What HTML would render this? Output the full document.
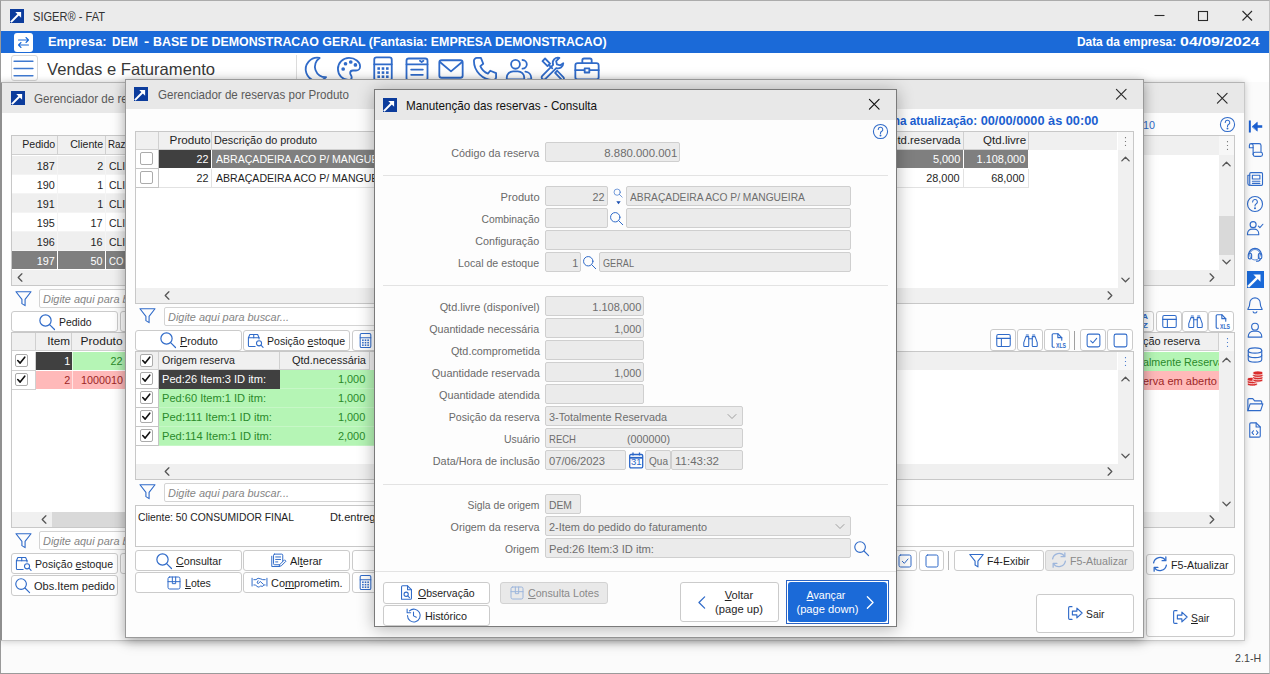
<!DOCTYPE html>
<html lang="pt-BR"><head><meta charset="utf-8"><title>SIGER - FAT</title>
<style>
html,body{margin:0;padding:0;}
body{width:1270px;height:674px;overflow:hidden;background:#fbfbfb;font-family:"Liberation Sans",sans-serif;}
#root{position:relative;width:1270px;height:674px;overflow:hidden;}
#root div{position:absolute;box-sizing:border-box;}
.t{white-space:pre;overflow:visible;}
svg{position:absolute;overflow:visible;}
.win{background:#fdfdfd;border:1px solid #9a9a9a;}
.tb{background:#e8e8e8;}
.hd{background:#f0f0f0;border-right:1px solid #d0d0d0;border-bottom:1px solid #d0d0d0;}
.cell{border-right:1px solid #e2e2e2;border-bottom:1px solid #e2e2e2;}
.btn{background:#fff;border:1px solid #cbcbcb;border-radius:3px;}
.btnd{background:#e9e9e9;border:1px solid #d2d2d2;border-radius:3px;}
.inp{background:#ebebeb;border:1px solid #cfcfcf;border-radius:2px;}
.fin{background:#fff;border:1px solid #d4d4d4;border-radius:2px;}
.sb{background:#f0f0f0;}
.grid{background:#fff;border:1px solid #c8c8c8;}
.sep{background:#e3e3e3;height:1px;}
.chk{background:#fff;border:1px solid #ababab;border-radius:2px;}
u{text-decoration:underline;text-underline-offset:1px;}

</style></head><body>
<div id="root">
<div class="" style="left:0px;top:0px;width:1270px;height:674px;background:#fbfbfb;border:1px solid;border-color:#ababab #c4c4c4 #9a9a9a #9a9a9a;"></div>
<div class="" style="left:1px;top:1px;width:1268px;height:30px;background:#ebebeb;"></div>
<svg style="left:10px;top:9px" width="14" height="14" viewBox="0 0 16 16"><rect width="16" height="16" fill="#0c3c9c"/><path d="M1 15L10.500 5.500" stroke="#fff" stroke-width="2.300" fill="none"/><path d="M6 3.300h6.700V10z" fill="#fff"/></svg>
<div class="t" style="top:1px;height:31px;line-height:31px;font-size:13.00px;color:#333;left:33px;transform-origin:0 50%;transform:scaleX(0.8525);">SIGER® - FAT</div>
<svg style="left:1153px;top:8px" width="110" height="16" viewBox="0 0 110 16" fill="none" stroke="#2a2a2a" stroke-width="1.100"><path d="M1.500 7.500h10"/><rect x="45.500" y="3.500" width="9" height="9"/><path d="M89.500 3l9.500 9.500M99 3L89.500 12.500"/></svg>
<div class="" style="left:1px;top:31px;width:1268px;height:22px;background:#1b6ad8;"></div>
<div class="" style="left:14px;top:33px;width:19px;height:19px;background:#fff;border-radius:3px;"></div>
<svg style="left:16.0px;top:35.0px;color:#1b6ad8" width="15" height="15" viewBox="0 0 24 24" fill="none" stroke="#1b6ad8" stroke-width="1.7" stroke-linecap="round" stroke-linejoin="round" ><path d="M4 8h16M16 4l4 4-4 4"/><path d="M20 16H4M8 12l-4 4 4 4"/></svg>
<div class="t" style="top:32px;height:21px;line-height:21px;font-size:12.50px;color:#fff;font-weight:bold;left:47.5px;transform-origin:0 50%;transform:scaleX(1.0286);">Empresa:</div>
<div class="t" style="top:32px;height:21px;line-height:21px;font-size:12.50px;color:#fff;font-weight:bold;left:111.5px;transform-origin:0 50%;transform:scaleX(0.9288);">DEM</div>
<div class="t" style="top:32px;height:21px;line-height:21px;font-size:12.50px;color:#fff;font-weight:bold;left:144px;transform-origin:0 50%;transform:scaleX(1.2491);">-</div>
<div class="t" style="top:32px;height:21px;line-height:21px;font-size:12.50px;color:#fff;font-weight:bold;left:152.9px;transform-origin:0 50%;transform:scaleX(0.9909);">BASE DE DEMONSTRACAO GERAL (Fantasia: EMPRESA DEMONSTRACAO)</div>
<div class="t" style="top:32px;height:21px;line-height:21px;font-size:12.50px;color:#fff;font-weight:bold;right:10px;text-align:right;transform-origin:100% 50%;transform:scaleX(1.2707);">04/09/2024</div>
<div class="t" style="top:32px;height:21px;line-height:21px;font-size:12.50px;color:#fff;font-weight:bold;right:94.20000000000005px;text-align:right;transform-origin:100% 50%;transform:scaleX(0.9528);">Data da empresa:</div>
<div class="" style="left:1px;top:53px;width:1268px;height:29px;background:#fff;"></div>
<div class="" style="left:11px;top:55px;width:27px;height:26px;background:#fff;border:1px solid #d8d8d8;border-radius:3px;"></div>
<svg style="left:11.2px;top:56.400000000000006px;color:#3f79cf" width="25" height="25" viewBox="0 0 24 24" fill="none" stroke="#3f79cf" stroke-width="1.5" stroke-linecap="round" stroke-linejoin="round" ><path d="M3 5h18M3 12h18M3 19h18"/></svg>
<div class="t" style="top:54px;height:30px;line-height:30px;font-size:16.50px;color:#383838;left:47px;transform-origin:0 50%;transform:scaleX(1.0063);">Vendas e Faturamento</div>
<div class="" style="left:296px;top:55px;width:1px;height:24px;background:#dcdcdc;"></div>
<svg style="left:301.0px;top:54.5px;color:#306bc9" width="28" height="28" viewBox="0 0 24 24" fill="none" stroke="#306bc9" stroke-width="1.55" stroke-linecap="round" stroke-linejoin="round" ><path d="M16 2.500a10 10 0 1 0 5.500 16.500 9 9 0 0 1-5.500-16.500z"/></svg>
<svg style="left:335.0px;top:54.5px;color:#306bc9" width="28" height="28" viewBox="0 0 24 24" fill="none" stroke="#306bc9" stroke-width="1.55" stroke-linecap="round" stroke-linejoin="round" ><path d="M12 2.500a9.500 9.500 0 1 0 0 19c1.500 0 2.300-1 2.300-2.200 0-1.800-1.300-2.300-1.300-3.800 0-1.300 1-2.200 2.400-2.200h2.600c2 0 3.500-1.500 3.500-3.500 0-4-4.200-7.300-9.500-7.300z"/><circle cx="7" cy="12" r=".800" fill="currentColor"/><circle cx="9" cy="7.500" r=".800" fill="currentColor"/><circle cx="13.500" cy="6" r=".800" fill="currentColor"/><circle cx="17.500" cy="8.500" r=".800" fill="currentColor"/></svg>
<svg style="left:369.0px;top:54.5px;color:#306bc9" width="28" height="28" viewBox="0 0 24 24" fill="none" stroke="#306bc9" stroke-width="1.55" stroke-linecap="round" stroke-linejoin="round" ><rect x="4.500" y="2" width="15" height="20" rx="2"/><path d="M4.500 8h15"/><g fill="currentColor" stroke="none"><rect x="7.200" y="10.500" width="2.200" height="2.200"/><rect x="10.900" y="10.500" width="2.200" height="2.200"/><rect x="14.600" y="10.500" width="2.200" height="2.200"/><rect x="7.200" y="14" width="2.200" height="2.200"/><rect x="10.900" y="14" width="2.200" height="2.200"/><rect x="14.600" y="14" width="2.200" height="2.200"/><rect x="7.200" y="17.500" width="2.200" height="2.200"/><rect x="10.900" y="17.500" width="2.200" height="2.200"/><rect x="14.600" y="17.500" width="2.200" height="2.200"/></g></svg>
<svg style="left:403.0px;top:54.5px;color:#306bc9" width="28" height="28" viewBox="0 0 24 24" fill="none" stroke="#306bc9" stroke-width="1.55" stroke-linecap="round" stroke-linejoin="round" ><rect x="3" y="3" width="18" height="19" rx="2"/><path d="M3 8h18"/><path d="M7 12.500h10M7 17h10"/><path d="M14.500 5l1.500 1 1.500-1"/></svg>
<svg style="left:437.0px;top:54.5px;color:#306bc9" width="28" height="28" viewBox="0 0 24 24" fill="none" stroke="#306bc9" stroke-width="1.55" stroke-linecap="round" stroke-linejoin="round" ><rect x="2" y="4.500" width="20" height="15" rx="2"/><path d="M2.500 6l9.500 8 9.500-8"/></svg>
<svg style="left:471.0px;top:54.5px;color:#306bc9" width="28" height="28" viewBox="0 0 24 24" fill="none" stroke="#306bc9" stroke-width="1.55" stroke-linecap="round" stroke-linejoin="round" ><path d="M5 2.500h3.500l2 5-2.500 2a12 12 0 0 0 6.500 6.500l2-2.500 5 2V19a2.500 2.500 0 0 1-2.500 2.500C10 21.500 2.500 14 2.500 5A2.500 2.500 0 0 1 5 2.500z"/></svg>
<svg style="left:505.0px;top:54.5px;color:#306bc9" width="28" height="28" viewBox="0 0 24 24" fill="none" stroke="#306bc9" stroke-width="1.55" stroke-linecap="round" stroke-linejoin="round" ><circle cx="9" cy="8" r="3.800"/><path d="M1.500 21v-1.500a5.500 5.500 0 0 1 5.500-5.500h4a5.500 5.500 0 0 1 5.500 5.500V21z"/><path d="M15 4.300a3.700 3.700 0 0 1 0 7.400"/><path d="M17.500 14.200a5.500 5.500 0 0 1 5 5.300V21h-3"/></svg>
<svg style="left:539.0px;top:54.5px;color:#306bc9" width="28" height="28" viewBox="0 0 24 24" fill="none" stroke="#306bc9" stroke-width="1.55" stroke-linecap="round" stroke-linejoin="round" ><path d="M20.800 7a4.500 4.500 0 0 1-6 4.200L5.500 20.500a1.900 1.900 0 0 1-2.700-2.700L12.100 8.500A4.500 4.500 0 0 1 17.500 2.500l-2.800 2.800 .700 2.800 2.800 .700z"/><path d="M3 5.200L5.200 3l4.300 4.300-2.200 2.200z"/><path d="M8.400 8.400l3 3"/><path d="M13.800 15.300l1.800-1.800 5.600 5.900a1.300 1.300 0 0 1-1.800 1.800z"/></svg>
<svg style="left:573.0px;top:54.5px;color:#306bc9" width="28" height="28" viewBox="0 0 24 24" fill="none" stroke="#306bc9" stroke-width="1.55" stroke-linecap="round" stroke-linejoin="round" ><rect x="2" y="7" width="20" height="14" rx="2"/><path d="M8 7V4.500a1.500 1.500 0 0 1 1.500-1.500h5a1.500 1.500 0 0 1 1.500 1.500V7"/><path d="M2 13h20"/><rect x="10" y="11.500" width="4" height="3.500" fill="#fff"/></svg>
<div class="t" style="top:648px;height:20px;line-height:20px;font-size:11.50px;color:#444;right:8.5px;text-align:right;transform-origin:100% 50%;transform:scaleX(0.9245);">2.1-H</div>
<div class="" style="left:1245px;top:82px;width:24px;height:559px;background:#fbfbfb;"></div>
<svg style="left:1246.5px;top:118.0px;color:#1b5fd0" width="17" height="17" viewBox="0 0 24 24" fill="none" stroke="#1b5fd0" stroke-width="2.4" stroke-linecap="round" stroke-linejoin="round" ><path d="M4 3.500v17" stroke-width="2.800" stroke-linecap="butt"/><path d="M13 12h8.500" stroke-width="3.600" stroke-linecap="butt"/><path d="M7.500 12l7-6v12z" fill="currentColor" stroke-width="1"/></svg>
<svg style="left:1246.0px;top:141.0px;color:#306bc9" width="18" height="18" viewBox="0 0 24 24" fill="none" stroke="#306bc9" stroke-width="1.5" stroke-linecap="round" stroke-linejoin="round" ><path d="M7 3.500h10.500a2.500 2.500 0 0 1 2.500 2.500v8"/><path d="M7 3.500a2.500 2.500 0 0 0-2.500 2.500v3h5v-3a2.500 2.500 0 0 0-2.500-2.500z"/><path d="M9.500 9v9"/><rect x="9.500" y="15" width="12.500" height="5.500" rx="2.500"/></svg>
<svg style="left:1246.0px;top:170.0px;color:#306bc9" width="18" height="18" viewBox="0 0 24 24" fill="none" stroke="#306bc9" stroke-width="1.5" stroke-linecap="round" stroke-linejoin="round" ><rect x="5" y="3.500" width="17" height="17" rx="1.500"/><path d="M5 7H2.500v11a2.500 2.500 0 0 0 2.500 2.500"/><rect x="8.500" y="7" width="10" height="5"/><path d="M8.500 15h10M8.500 17.800h10"/></svg>
<svg style="left:1246.0px;top:195.0px;color:#306bc9" width="18" height="18" viewBox="0 0 24 24" fill="none" stroke="#306bc9" stroke-width="1.5" stroke-linecap="round" stroke-linejoin="round" ><circle cx="12" cy="12" r="10"/><path d="M8.8 9.2a3.2 3.2 0 1 1 4.6 2.9c-.9.5-1.4 1.1-1.4 2.2v.4"/><circle cx="12" cy="17.6" r=".6" fill="currentColor"/></svg>
<svg style="left:1246.0px;top:219.0px;color:#306bc9" width="18" height="18" viewBox="0 0 24 24" fill="none" stroke="#306bc9" stroke-width="1.5" stroke-linecap="round" stroke-linejoin="round" ><circle cx="9.500" cy="7.500" r="4"/><path d="M2 21v-1.500a6 6 0 0 1 6-6h3a6 6 0 0 1 6 6V21z"/><path d="M16.500 9.500l2 2 4-4.500"/></svg>
<svg style="left:1246.0px;top:245.0px;color:#306bc9" width="18" height="18" viewBox="0 0 24 24" fill="none" stroke="#306bc9" stroke-width="1.5" stroke-linecap="round" stroke-linejoin="round" ><path d="M3.500 13a8.500 8.500 0 0 1 17 0"/><rect x="3" y="11" width="4.500" height="7.500" rx="2"/><rect x="16.500" y="11" width="4.500" height="7.500" rx="2"/><path d="M19 18.500c0 2-2 3-5 3"/><circle cx="12" cy="13" r="7" stroke-width="1"/></svg>
<svg style="left:1247px;top:270.5px" width="17" height="17" viewBox="0 0 16 16"><rect width="16" height="16" fill="#1b6ad8"/><path d="M1 15L10.500 5.500" stroke="#fff" stroke-width="2.300" fill="none"/><path d="M6 3.300h6.700V10z" fill="#fff"/></svg>
<svg style="left:1246.0px;top:296.0px;color:#306bc9" width="18" height="18" viewBox="0 0 24 24" fill="none" stroke="#306bc9" stroke-width="1.5" stroke-linecap="round" stroke-linejoin="round" ><path d="M12 2.500a7 7 0 0 0-7 7c0 5-2.500 7-2.500 8.500h19c0-1.500-2.500-3.500-2.500-8.500a7 7 0 0 0-7-7z"/><path d="M9.500 21a2.700 2.700 0 0 0 5 0"/></svg>
<svg style="left:1246.0px;top:321.0px;color:#306bc9" width="18" height="18" viewBox="0 0 24 24" fill="none" stroke="#306bc9" stroke-width="1.5" stroke-linecap="round" stroke-linejoin="round" ><circle cx="12" cy="7.500" r="4.500"/><path d="M3 21.500v-1a7 7 0 0 1 7-7h4a7 7 0 0 1 7 7v1z"/></svg>
<svg style="left:1246.0px;top:345.5px;color:#306bc9" width="18" height="18" viewBox="0 0 24 24" fill="none" stroke="#306bc9" stroke-width="1.5" stroke-linecap="round" stroke-linejoin="round" ><ellipse cx="12" cy="6" rx="9" ry="3.500"/><path d="M3 6v12c0 2 4 3.500 9 3.500s9-1.500 9-3.500V6"/><path d="M3 12c0 2 4 3.500 9 3.500s9-1.500 9-3.500"/></svg>
<svg style="left:1245.5px;top:369.0px" width="19" height="19" viewBox="0 0 24 24"><ellipse cx="8" cy="19" rx="6.500" ry="2.600" fill="#d92b2b" stroke="#fff" stroke-width="1"/><ellipse cx="8" cy="16" rx="6.500" ry="2.600" fill="#d92b2b" stroke="#fff" stroke-width="1"/><ellipse cx="8" cy="13" rx="6.500" ry="2.600" fill="#d92b2b" stroke="#fff" stroke-width="1"/><ellipse cx="15" cy="14" rx="6.500" ry="2.600" fill="#d92b2b" stroke="#fff" stroke-width="1"/><ellipse cx="15" cy="11" rx="6.500" ry="2.600" fill="#d92b2b" stroke="#fff" stroke-width="1"/><ellipse cx="15" cy="8" rx="6.500" ry="2.600" fill="#d92b2b" stroke="#fff" stroke-width="1"/><ellipse cx="15" cy="5" rx="6.500" ry="2.600" fill="#d92b2b" stroke="#fff" stroke-width="1"/></svg>
<svg style="left:1246.0px;top:395.5px;color:#306bc9" width="18" height="18" viewBox="0 0 24 24" fill="none" stroke="#306bc9" stroke-width="1.5" stroke-linecap="round" stroke-linejoin="round" ><path d="M2.500 19.500V5a1.500 1.500 0 0 1 1.500-1.500h5l2.500 3h8a1.500 1.500 0 0 1 1.500 1.500v2"/><path d="M2.500 19.500l3-9h17l-3 9z"/></svg>
<svg style="left:1246.0px;top:421.0px;color:#306bc9" width="18" height="18" viewBox="0 0 24 24" fill="none" stroke="#306bc9" stroke-width="1.5" stroke-linecap="round" stroke-linejoin="round" ><path d="M5 21.500V4a1.500 1.500 0 0 1 1.500-1.500h7l5.500 5.500v12a1.500 1.500 0 0 1-1.500 1.500z"/><path d="M13.500 2.500v5.500h5.500"/><path d="M10 13l-2 2.500 2 2.500M14 13l2 2.500-2 2.500"/></svg>
<div class="win" style="left:0px;top:82px;width:1245px;height:559px;border-color:#c9c9c9;border-top-color:#b4b4b4;border-left:2px solid #8e8e8e;box-shadow:0 0 7px rgba(0,0,0,.22);"></div>
<div class="tb" style="left:2px;top:83px;width:1242px;height:30px;"></div>
<svg style="left:11px;top:91px" width="14" height="14" viewBox="0 0 16 16"><rect width="16" height="16" fill="#0c3c9c"/><path d="M1 15L10.500 5.500" stroke="#fff" stroke-width="2.300" fill="none"/><path d="M6 3.300h6.700V10z" fill="#fff"/></svg>
<div class="t" style="top:84px;height:30px;line-height:30px;font-size:12.33px;color:#5a5a5a;left:34px;transform-origin:0 50%;transform:scaleX(0.9435);">Gerenciador de reservas</div>
<svg style="left:1214.75px;top:90.75px;color:#2a2a2a" width="14.5" height="14.5" viewBox="0 0 24 24" fill="none" stroke="#2a2a2a" stroke-width="1.9" stroke-linecap="round" stroke-linejoin="round" ><path d="M4 4l16 16M20 4L4 20"/></svg>
<div class="t" style="top:117px;height:16px;line-height:16px;font-size:10.50px;color:#306bc9;left:1143px;transform-origin:0 50%;transform:scaleX(1.0285);">10</div>
<svg style="left:1218.5px;top:115.5px;color:#306bc9" width="17" height="17" viewBox="0 0 24 24" fill="none" stroke="#306bc9" stroke-width="1.5" stroke-linecap="round" stroke-linejoin="round" ><circle cx="12" cy="12" r="10"/><path d="M8.8 9.2a3.2 3.2 0 1 1 4.6 2.9c-.9.5-1.4 1.1-1.4 2.2v.4"/><circle cx="12" cy="17.6" r=".6" fill="currentColor"/></svg>
<div class="grid" style="left:11px;top:135px;width:1224px;height:151px;"></div>
<div class="" style="left:12px;top:136px;width:1207px;height:19px;background:#f0f0f0;"></div>
<div class="" style="left:12px;top:155px;width:1207px;height:1px;background:#fff;"></div>
<div class="hd" style="left:12px;top:136px;width:46px;height:19px;"></div>
<div class="hd" style="left:58px;top:136px;width:48px;height:19px;"></div>
<div class="hd" style="left:106px;top:136px;width:294px;height:19px;"></div>
<div class="t" style="top:135px;height:18px;line-height:18px;font-size:11.30px;color:#1e1e1e;right:1215px;text-align:right;transform-origin:100% 50%;transform:scaleX(0.9378);">Pedido</div>
<div class="t" style="top:135px;height:18px;line-height:18px;font-size:11.30px;color:#1e1e1e;right:1167px;text-align:right;transform-origin:100% 50%;transform:scaleX(0.9381);">Cliente</div>
<div class="t" style="top:135px;height:18px;line-height:18px;font-size:11.30px;color:#1e1e1e;left:108px;transform-origin:0 50%;transform:scaleX(0.8703);">Raz</div>
<div class="" style="left:12px;top:156px;width:1000px;height:19px;background:#efefef;"></div>
<div class="cell" style="left:12px;top:156px;width:46px;height:19px;border-color:#f4f4f4;"></div>
<div class="cell" style="left:58px;top:156px;width:48px;height:19px;border-color:#f4f4f4;"></div>
<div class="cell" style="left:106px;top:156px;width:294px;height:19px;border-color:#f4f4f4;"></div>
<div class="t" style="top:157px;height:18px;line-height:18px;font-size:11.30px;color:#1e1e1e;right:1215px;text-align:right;transform-origin:100% 50%;transform:scaleX(0.9556);">187</div>
<div class="t" style="top:157px;height:18px;line-height:18px;font-size:11.30px;color:#1e1e1e;right:1167px;text-align:right;transform-origin:100% 50%;transform:scaleX(0.9556);">2</div>
<div class="t" style="top:157px;height:18px;line-height:18px;font-size:11.30px;color:#1e1e1e;left:109px;transform-origin:0 50%;transform:scaleX(0.9208);">CLI</div>
<div class="" style="left:12px;top:175px;width:1000px;height:19px;background:#fff;"></div>
<div class="cell" style="left:12px;top:175px;width:46px;height:19px;border-color:#f4f4f4;"></div>
<div class="cell" style="left:58px;top:175px;width:48px;height:19px;border-color:#f4f4f4;"></div>
<div class="cell" style="left:106px;top:175px;width:294px;height:19px;border-color:#f4f4f4;"></div>
<div class="t" style="top:176px;height:18px;line-height:18px;font-size:11.30px;color:#1e1e1e;right:1215px;text-align:right;transform-origin:100% 50%;transform:scaleX(0.9556);">190</div>
<div class="t" style="top:176px;height:18px;line-height:18px;font-size:11.30px;color:#1e1e1e;right:1167px;text-align:right;transform-origin:100% 50%;transform:scaleX(0.9556);">1</div>
<div class="t" style="top:176px;height:18px;line-height:18px;font-size:11.30px;color:#1e1e1e;left:109px;transform-origin:0 50%;transform:scaleX(0.9208);">CLI</div>
<div class="" style="left:12px;top:194px;width:1000px;height:19px;background:#efefef;"></div>
<div class="cell" style="left:12px;top:194px;width:46px;height:19px;border-color:#f4f4f4;"></div>
<div class="cell" style="left:58px;top:194px;width:48px;height:19px;border-color:#f4f4f4;"></div>
<div class="cell" style="left:106px;top:194px;width:294px;height:19px;border-color:#f4f4f4;"></div>
<div class="t" style="top:195px;height:18px;line-height:18px;font-size:11.30px;color:#1e1e1e;right:1215px;text-align:right;transform-origin:100% 50%;transform:scaleX(0.9556);">191</div>
<div class="t" style="top:195px;height:18px;line-height:18px;font-size:11.30px;color:#1e1e1e;right:1167px;text-align:right;transform-origin:100% 50%;transform:scaleX(0.9556);">1</div>
<div class="t" style="top:195px;height:18px;line-height:18px;font-size:11.30px;color:#1e1e1e;left:109px;transform-origin:0 50%;transform:scaleX(0.9208);">CLI</div>
<div class="" style="left:12px;top:213px;width:1000px;height:19px;background:#fff;"></div>
<div class="cell" style="left:12px;top:213px;width:46px;height:19px;border-color:#f4f4f4;"></div>
<div class="cell" style="left:58px;top:213px;width:48px;height:19px;border-color:#f4f4f4;"></div>
<div class="cell" style="left:106px;top:213px;width:294px;height:19px;border-color:#f4f4f4;"></div>
<div class="t" style="top:214px;height:18px;line-height:18px;font-size:11.30px;color:#1e1e1e;right:1215px;text-align:right;transform-origin:100% 50%;transform:scaleX(0.9556);">195</div>
<div class="t" style="top:214px;height:18px;line-height:18px;font-size:11.30px;color:#1e1e1e;right:1167px;text-align:right;transform-origin:100% 50%;transform:scaleX(0.9556);">17</div>
<div class="t" style="top:214px;height:18px;line-height:18px;font-size:11.30px;color:#1e1e1e;left:109px;transform-origin:0 50%;transform:scaleX(0.9208);">CLI</div>
<div class="" style="left:12px;top:232px;width:1000px;height:19px;background:#efefef;"></div>
<div class="cell" style="left:12px;top:232px;width:46px;height:19px;border-color:#f4f4f4;"></div>
<div class="cell" style="left:58px;top:232px;width:48px;height:19px;border-color:#f4f4f4;"></div>
<div class="cell" style="left:106px;top:232px;width:294px;height:19px;border-color:#f4f4f4;"></div>
<div class="t" style="top:233px;height:18px;line-height:18px;font-size:11.30px;color:#1e1e1e;right:1215px;text-align:right;transform-origin:100% 50%;transform:scaleX(0.9556);">196</div>
<div class="t" style="top:233px;height:18px;line-height:18px;font-size:11.30px;color:#1e1e1e;right:1167px;text-align:right;transform-origin:100% 50%;transform:scaleX(0.9556);">16</div>
<div class="t" style="top:233px;height:18px;line-height:18px;font-size:11.30px;color:#1e1e1e;left:109px;transform-origin:0 50%;transform:scaleX(0.9208);">CLI</div>
<div class="" style="left:12px;top:251px;width:1000px;height:19px;background:#7f7f7f;"></div>
<div class="cell" style="left:12px;top:251px;width:46px;height:19px;border-color:#fff;"></div>
<div class="cell" style="left:58px;top:251px;width:48px;height:19px;border-color:#fff;"></div>
<div class="cell" style="left:106px;top:251px;width:294px;height:19px;border-color:#fff;"></div>
<div class="t" style="top:252px;height:18px;line-height:18px;font-size:11.30px;color:#fff;right:1215px;text-align:right;transform-origin:100% 50%;transform:scaleX(0.9556);">197</div>
<div class="t" style="top:252px;height:18px;line-height:18px;font-size:11.30px;color:#fff;right:1167px;text-align:right;transform-origin:100% 50%;transform:scaleX(0.9556);">50</div>
<div class="t" style="top:252px;height:18px;line-height:18px;font-size:11.30px;color:#fff;left:109px;transform-origin:0 50%;transform:scaleX(0.8495);">CO</div>
<div class="sb" style="left:12px;top:270px;width:1222px;height:15px;"></div>
<svg style="left:14.5px;top:272.0px;color:#555" width="11" height="11" viewBox="0 0 24 24" fill="none" stroke="#555" stroke-width="2.9" stroke-linecap="round" stroke-linejoin="round" ><path d="M15 4l-8 8 8 8"/></svg>
<svg style="left:1205.5px;top:272.0px;color:#555" width="11" height="11" viewBox="0 0 24 24" fill="none" stroke="#555" stroke-width="2.9" stroke-linecap="round" stroke-linejoin="round" ><path d="M9 4l8 8-8 8"/></svg>
<div class="sb" style="left:1219px;top:155px;width:15px;height:115px;"></div>
<div class="" style="left:1219px;top:216px;width:15px;height:39px;background:#d9d9d9;"></div>
<svg style="left:1221.0px;top:158.5px;color:#555" width="11" height="11" viewBox="0 0 24 24" fill="none" stroke="#555" stroke-width="2.9" stroke-linecap="round" stroke-linejoin="round" ><path d="M4 15l8-8 8 8"/></svg>
<svg style="left:1221.0px;top:255.5px;color:#555" width="11" height="11" viewBox="0 0 24 24" fill="none" stroke="#555" stroke-width="2.9" stroke-linecap="round" stroke-linejoin="round" ><path d="M4 9l8 8 8-8"/></svg>
<div class="" style="left:1219px;top:136px;width:15px;height:19px;background:#f7f7f7;"></div>
<svg style="left:1220.5px;top:138.5px;color:#666" width="13" height="13" viewBox="0 0 24 24" fill="none" stroke="#666" stroke-width="1" stroke-linecap="round" stroke-linejoin="round" ><circle cx="12" cy="5" r="1.1" fill="currentColor" stroke="none"/><circle cx="12" cy="12" r="1.1" fill="currentColor" stroke="none"/><circle cx="12" cy="19" r="1.1" fill="currentColor" stroke="none"/></svg>
<svg style="left:14.0px;top:289.0px;color:#306bc9" width="19" height="19" viewBox="0 0 24 24" fill="none" stroke="#306bc9" stroke-width="1.4" stroke-linecap="round" stroke-linejoin="round" ><path d="M2.5 3.5h19l-7.5 9.5v8l-4-2.5v-5.5z"/></svg>
<div class="fin" style="left:39px;top:289px;width:673px;height:19px;"></div>
<div class="t" style="top:290px;height:19px;line-height:19px;font-size:11.30px;color:#858585;font-style:italic;left:43px;transform-origin:0 50%;transform:scaleX(0.9664);">Digite aqui para buscar...</div>
<div class="btn" style="left:11px;top:311px;width:107px;height:21px;"></div>
<svg style="left:37.7475px;top:312.5px;color:#306bc9" width="18" height="18" viewBox="0 0 24 24" fill="none" stroke="#306bc9" stroke-width="1.6" stroke-linecap="round" stroke-linejoin="round" ><circle cx="10" cy="10" r="7.5"/><path d="M15.5 15.5L22 22"/></svg>
<div class="t" style="top:312px;height:21px;line-height:21px;font-size:11.30px;color:#1e1e1e;left:58.7475px;transform-origin:0 50%;transform:scaleX(0.9238);">Pedido</div>
<div class="btn" style="left:120px;top:311px;width:107px;height:21px;"></div>
<div class="btn" style="left:1128px;top:311px;width:26px;height:21px;"></div>
<div class="t" style="top:312px;height:9px;line-height:9px;font-size:8.00px;color:#306bc9;font-weight:bold;left:1142px;transform-origin:0 50%;transform:scaleX(1.0385);">A</div>
<div class="t" style="top:320.5px;height:9px;line-height:9px;font-size:8.00px;color:#306bc9;font-weight:bold;left:1142px;transform-origin:0 50%;transform:scaleX(1.2278);">Z</div>
<div class="btn" style="left:1156px;top:311px;width:26px;height:21px;"></div>
<svg style="left:1160.5px;top:313.0px;color:#306bc9" width="17" height="17" viewBox="0 0 24 24" fill="none" stroke="#306bc9" stroke-width="1.5" stroke-linecap="round" stroke-linejoin="round" ><rect x="2.500" y="3.500" width="19" height="17" rx="2"/><path d="M2.500 9h19M9 9v11.500"/></svg>
<div class="btn" style="left:1182px;top:311px;width:26px;height:21px;"></div>
<svg style="left:1186.5px;top:313.0px;color:#306bc9" width="17" height="17" viewBox="0 0 24 24" fill="none" stroke="#306bc9" stroke-width="1.5" stroke-linecap="round" stroke-linejoin="round" ><path d="M5.500 6.500L2.500 15v4.500a1 1 0 0 0 1 1h5a1 1 0 0 0 1-1V6.500z"/><path d="M18.500 6.500l3 8.500v4.500a1 1 0 0 1-1 1h-5a1 1 0 0 1-1-1V6.500z"/><path d="M9.500 9.500h5"/><path d="M6 4.200h3M15 4.200h3"/></svg>
<div class="btn" style="left:1208px;top:311px;width:26px;height:21px;"></div>
<svg style="left:1212.5px;top:313.0px;color:#306bc9" width="17" height="17" viewBox="0 0 24 24" fill="none" stroke="#306bc9" stroke-width="1.6" stroke-linecap="round" stroke-linejoin="round" ><path d="M7.500 21.500H6a1.500 1.500 0 0 1-1.500-1.500V4a1.500 1.500 0 0 1 1.500-1.500h6.500l5.500 5.500v3.500"/><path d="M12.500 2.500v5.500h5.500"/></svg>
<div class="t" style="top:322.5px;height:8px;line-height:8px;font-size:7.00px;color:#306bc9;font-weight:bold;left:1219.5px;transform-origin:0 50%;transform:scaleX(0.7345);">XLS</div>
<div class="grid" style="left:11px;top:332px;width:1224px;height:196px;"></div>
<div class="" style="left:12px;top:333px;width:1207px;height:18px;background:#f0f0f0;"></div>
<div class="hd" style="left:12px;top:333px;width:24px;height:18px;"></div>
<div class="hd" style="left:36px;top:333px;width:36px;height:18px;"></div>
<div class="hd" style="left:72px;top:333px;width:55px;height:18px;"></div>
<div class="t" style="top:332px;height:18px;line-height:18px;font-size:11.30px;color:#1e1e1e;right:1200px;text-align:right;transform-origin:100% 50%;transform:scaleX(1.0376);">Item</div>
<div class="t" style="top:332px;height:18px;line-height:18px;font-size:11.30px;color:#1e1e1e;right:1147px;text-align:right;transform-origin:100% 50%;transform:scaleX(1.0612);">Produto</div>
<div class="" style="left:36px;top:352px;width:1183px;height:19px;background:#b5f5b5;border-bottom:1px solid #fff;"></div>
<div class="" style="left:36px;top:352px;width:36px;height:18px;background:#404040;"></div>
<div class="" style="left:72px;top:352px;width:1px;height:19px;background:rgba(255,255,255,.6);"></div>
<div class="" style="left:12px;top:352px;width:24px;height:19px;background:#fff;border-right:1px solid #d0d0d0;border-bottom:1px solid #d0d0d0;"></div>
<div class="chk" style="left:15.0px;top:354.0px;width:13px;height:13px;"></div>
<svg style="left:16.25px;top:355.25px;color:#111" width="10.5" height="10.5" viewBox="0 0 24 24" fill="none" stroke="#111" stroke-width="3.6" stroke-linecap="round" stroke-linejoin="round" ><path d="M4 12.500l5.500 6L20 5"/></svg>
<div class="t" style="top:352px;height:18px;line-height:18px;font-size:11.30px;color:#fff;right:1200px;text-align:right;transform-origin:100% 50%;transform:scaleX(0.9556);">1</div>
<div class="t" style="top:352px;height:18px;line-height:18px;font-size:11.30px;color:#2a8a2a;right:1147px;text-align:right;transform-origin:100% 50%;transform:scaleX(0.9556);">22</div>
<div class="" style="left:36px;top:371px;width:1183px;height:19px;background:#ffb9b9;border-bottom:1px solid #fff;"></div>
<div class="" style="left:72px;top:371px;width:1px;height:19px;background:rgba(255,255,255,.6);"></div>
<div class="" style="left:12px;top:371px;width:24px;height:19px;background:#fff;border-right:1px solid #d0d0d0;border-bottom:1px solid #d0d0d0;"></div>
<div class="chk" style="left:15.0px;top:373.0px;width:13px;height:13px;"></div>
<svg style="left:16.25px;top:374.25px;color:#111" width="10.5" height="10.5" viewBox="0 0 24 24" fill="none" stroke="#111" stroke-width="3.6" stroke-linecap="round" stroke-linejoin="round" ><path d="M4 12.500l5.500 6L20 5"/></svg>
<div class="t" style="top:371px;height:18px;line-height:18px;font-size:11.30px;color:#9c2626;right:1200px;text-align:right;transform-origin:100% 50%;transform:scaleX(0.9556);">2</div>
<div class="t" style="top:371px;height:18px;line-height:18px;font-size:11.30px;color:#9c2626;right:1147px;text-align:right;transform-origin:100% 50%;transform:scaleX(0.9556);">1000010</div>
<div class="hd" style="left:1143px;top:333px;width:76px;height:18px;"></div>
<div class="t" style="top:332px;height:18px;line-height:18px;font-size:11.30px;color:#1e1e1e;left:1143px;transform-origin:0 50%;transform:scaleX(0.9654);">ção reserva</div>
<div class="" style="left:1143px;top:352px;width:76px;height:19px;background:#b5f5b5;"></div>
<div class="t" style="top:353px;height:18px;line-height:18px;font-size:11.30px;color:#2a8a2a;left:1143px;transform-origin:0 50%;transform:scaleX(0.9483);">almente Reserva</div>
<div class="" style="left:1143px;top:371px;width:76px;height:19px;background:#ffb9b9;"></div>
<div class="t" style="top:372px;height:18px;line-height:18px;font-size:11.30px;color:#9c2626;left:1143px;transform-origin:0 50%;transform:scaleX(0.9737);">erva em aberto</div>
<div class="sb" style="left:1219px;top:351px;width:15px;height:161px;"></div>
<svg style="left:1221.0px;top:354.5px;color:#555" width="11" height="11" viewBox="0 0 24 24" fill="none" stroke="#555" stroke-width="2.9" stroke-linecap="round" stroke-linejoin="round" ><path d="M4 15l8-8 8 8"/></svg>
<svg style="left:1221.0px;top:497.5px;color:#555" width="11" height="11" viewBox="0 0 24 24" fill="none" stroke="#555" stroke-width="2.9" stroke-linecap="round" stroke-linejoin="round" ><path d="M4 9l8 8 8-8"/></svg>
<div class="" style="left:1219px;top:333px;width:15px;height:18px;background:#f7f7f7;"></div>
<svg style="left:1220.5px;top:335.5px;color:#306bc9" width="13" height="13" viewBox="0 0 24 24" fill="none" stroke="#306bc9" stroke-width="1" stroke-linecap="round" stroke-linejoin="round" ><circle cx="12" cy="5" r="1.1" fill="currentColor" stroke="none"/><circle cx="12" cy="12" r="1.1" fill="currentColor" stroke="none"/><circle cx="12" cy="19" r="1.1" fill="currentColor" stroke="none"/></svg>
<div class="sb" style="left:12px;top:512px;width:1222px;height:15px;"></div>
<div class="" style="left:52px;top:512px;width:900px;height:15px;background:#d9d9d9;"></div>
<svg style="left:38.5px;top:514.0px;color:#555" width="11" height="11" viewBox="0 0 24 24" fill="none" stroke="#555" stroke-width="2.9" stroke-linecap="round" stroke-linejoin="round" ><path d="M15 4l-8 8 8 8"/></svg>
<svg style="left:1205.5px;top:514.0px;color:#555" width="11" height="11" viewBox="0 0 24 24" fill="none" stroke="#555" stroke-width="2.9" stroke-linecap="round" stroke-linejoin="round" ><path d="M9 4l8 8-8 8"/></svg>
<svg style="left:14.0px;top:530.5px;color:#306bc9" width="19" height="19" viewBox="0 0 24 24" fill="none" stroke="#306bc9" stroke-width="1.4" stroke-linecap="round" stroke-linejoin="round" ><path d="M2.5 3.5h19l-7.5 9.5v8l-4-2.5v-5.5z"/></svg>
<div class="fin" style="left:39px;top:531px;width:673px;height:19px;"></div>
<div class="t" style="top:532px;height:19px;line-height:19px;font-size:11.30px;color:#858585;font-style:italic;left:43px;transform-origin:0 50%;transform:scaleX(0.9664);">Digite aqui para buscar...</div>
<div class="btn" style="left:11px;top:553px;width:107px;height:21px;"></div>
<svg style="left:15.466500000000003px;top:555.0px;color:#306bc9" width="17" height="17" viewBox="0 0 24 24" fill="none" stroke="#306bc9" stroke-width="1.5" stroke-linecap="round" stroke-linejoin="round" ><path d="M2 8v11a1.5 1.5 0 0 0 1.500 1.500h8"/><path d="M2 8l2-4.500h11l2 4.500z"/><path d="M9.500 3.500v4.500"/><path d="M17 8v2"/><circle cx="17" cy="16" r="3.600"/><path d="M19.700 18.700l3 3"/></svg>
<div class="t" style="top:554px;height:21px;line-height:21px;font-size:11.30px;color:#1e1e1e;left:35.4665px;transform-origin:0 50%;transform:scaleX(0.9343);">Posição <u>e</u>stoque</div>
<div class="btn" style="left:120px;top:553px;width:107px;height:21px;"></div>
<div class="btn" style="left:11px;top:575px;width:107px;height:21px;"></div>
<svg style="left:14.058500000000002px;top:577.0px;color:#306bc9" width="17" height="17" viewBox="0 0 24 24" fill="none" stroke="#306bc9" stroke-width="1.6" stroke-linecap="round" stroke-linejoin="round" ><circle cx="10" cy="10" r="7.5"/><path d="M15.5 15.5L22 22"/></svg>
<div class="t" style="top:576px;height:21px;line-height:21px;font-size:11.30px;color:#1e1e1e;left:34.0585px;transform-origin:0 50%;transform:scaleX(0.9755);">Obs.Item pedido</div>
<div class="btn" style="left:1145.5px;top:553.5px;width:89.5px;height:21px;"></div>
<svg style="left:1151.463px;top:555.0px;color:#306bc9" width="18" height="18" viewBox="0 0 24 24" fill="none" stroke="#306bc9" stroke-width="1.7" stroke-linecap="round" stroke-linejoin="round" ><path d="M3.500 10.500a8.700 8.700 0 0 1 15.800-3.500"/><path d="M19.800 2.500v5h-5"/><path d="M20.500 13.500a8.700 8.700 0 0 1-15.800 3.500"/><path d="M4.200 21.500v-5h5"/></svg>
<div class="t" style="top:554.5px;height:21px;line-height:21px;font-size:11.30px;color:#1e1e1e;left:1171.463px;transform-origin:0 50%;transform:scaleX(0.9451);">F5-Atualizar</div>
<div class="btn" style="left:1145.5px;top:597.5px;width:89.5px;height:39px;"></div>
<svg style="left:1171.0595px;top:608.0px;color:#306bc9" width="18" height="18" viewBox="0 0 24 24" fill="none" stroke="#306bc9" stroke-width="1.5" stroke-linecap="round" stroke-linejoin="round" ><path d="M8 3.500h-3a1.500 1.500 0 0 0-1.500 1.500v14a1.500 1.500 0 0 0 1.500 1.500h3"/><path d="M8.500 9.500h6v-4l7 6.500-7 6.500v-4h-6z"/></svg>
<div class="t" style="top:598.5px;height:39px;line-height:39px;font-size:11.30px;color:#1e1e1e;left:1191.0595px;transform-origin:0 50%;transform:scaleX(0.9146);"><u>S</u>air</div>
<div class="win" style="left:125px;top:79px;width:1019px;height:559px;box-shadow:0 3px 12px rgba(0,0,0,.36);"></div>
<div class="tb" style="left:126px;top:80px;width:1017px;height:29px;"></div>
<svg style="left:134px;top:87px" width="14" height="14" viewBox="0 0 16 16"><rect width="16" height="16" fill="#0c3c9c"/><path d="M1 15L10.500 5.500" stroke="#fff" stroke-width="2.300" fill="none"/><path d="M6 3.300h6.700V10z" fill="#fff"/></svg>
<div class="t" style="top:81px;height:29px;line-height:29px;font-size:12.33px;color:#5a5a5a;left:158px;transform-origin:0 50%;transform:scaleX(0.9385);">Gerenciador de reservas por Produto</div>
<svg style="left:1113.75px;top:86.75px;color:#2a2a2a" width="14.5" height="14.5" viewBox="0 0 24 24" fill="none" stroke="#2a2a2a" stroke-width="1.9" stroke-linecap="round" stroke-linejoin="round" ><path d="M4 4l16 16M20 4L4 20"/></svg>
<div class="t" style="top:113px;height:16px;line-height:16px;font-size:12.50px;color:#1b5fd0;font-weight:bold;right:172px;text-align:right;transform-origin:100% 50%;transform:scaleX(1.0201);">00/00/0000 às 00:00</div>
<div class="t" style="top:113px;height:16px;line-height:16px;font-size:12.50px;color:#1b5fd0;font-weight:bold;right:292.79999999999995px;text-align:right;transform-origin:100% 50%;transform:scaleX(0.9433);">Última atualização:</div>
<div class="grid" style="left:135px;top:131px;width:999px;height:173px;"></div>
<div class="" style="left:136px;top:132px;width:981px;height:18px;background:#f0f0f0;"></div>
<div class="hd" style="left:136px;top:132px;width:23px;height:18px;"></div>
<div class="hd" style="left:159px;top:132px;width:53px;height:18px;"></div>
<div class="hd" style="left:212px;top:132px;width:488px;height:18px;"></div>
<div class="hd" style="left:700px;top:132px;width:192px;height:18px;"></div>
<div class="hd" style="left:892px;top:132px;width:72px;height:18px;"></div>
<div class="hd" style="left:964px;top:132px;width:65px;height:18px;"></div>
<div class="t" style="top:131px;height:18px;line-height:18px;font-size:11.30px;color:#1e1e1e;right:1059px;text-align:right;transform-origin:100% 50%;transform:scaleX(1.0359);">Produto</div>
<div class="t" style="top:131px;height:18px;line-height:18px;font-size:11.30px;color:#1e1e1e;left:214px;transform-origin:0 50%;transform:scaleX(0.9589);">Descrição do produto</div>
<div class="t" style="top:131px;height:18px;line-height:18px;font-size:11.30px;color:#1e1e1e;right:309px;text-align:right;transform-origin:100% 50%;transform:scaleX(1.0055);">Qtd.reservada</div>
<div class="t" style="top:131px;height:18px;line-height:18px;font-size:11.30px;color:#1e1e1e;right:244px;text-align:right;transform-origin:100% 50%;transform:scaleX(1.0221);">Qtd.livre</div>
<div class="" style="left:159px;top:150px;width:870px;height:19px;background:#7f7f7f;"></div>
<div class="" style="left:159px;top:150px;width:53px;height:19px;background:#404040;"></div>
<div class="cell" style="left:136px;top:150px;width:23px;height:19px;border-color:#fff;"></div>
<div class="cell" style="left:159px;top:150px;width:53px;height:19px;border-color:#fff;"></div>
<div class="cell" style="left:212px;top:150px;width:488px;height:19px;border-color:#fff;"></div>
<div class="cell" style="left:700px;top:150px;width:192px;height:19px;border-color:#fff;"></div>
<div class="cell" style="left:892px;top:150px;width:72px;height:19px;border-color:#fff;"></div>
<div class="cell" style="left:964px;top:150px;width:65px;height:19px;border-color:#fff;"></div>
<div class="" style="left:136px;top:150px;width:23px;height:19px;background:#fff;border-right:1px solid #c4c4c4;border-bottom:1px solid #c4c4c4;"></div>
<div class="chk" style="left:139.5px;top:152.0px;width:13px;height:13px;"></div>
<div class="t" style="top:150px;height:18px;line-height:18px;font-size:11.30px;color:#fff;right:1061px;text-align:right;transform-origin:100% 50%;transform:scaleX(0.9556);">22</div>
<div class="t" style="top:150px;height:18px;line-height:18px;font-size:11.30px;color:#fff;left:216px;transform-origin:0 50%;transform:scaleX(0.9337);">ABRAÇADEIRA ACO P/ MANGUEIRA</div>
<div class="t" style="top:150px;height:18px;line-height:18px;font-size:11.30px;color:#fff;right:310px;text-align:right;transform-origin:100% 50%;transform:scaleX(0.9674);">5,000</div>
<div class="t" style="top:150px;height:18px;line-height:18px;font-size:11.30px;color:#fff;right:245px;text-align:right;transform-origin:100% 50%;transform:scaleX(0.9689);">1.108,000</div>
<div class="cell" style="left:136px;top:169px;width:23px;height:19px;"></div>
<div class="cell" style="left:159px;top:169px;width:53px;height:19px;"></div>
<div class="cell" style="left:212px;top:169px;width:488px;height:19px;"></div>
<div class="cell" style="left:700px;top:169px;width:192px;height:19px;"></div>
<div class="cell" style="left:892px;top:169px;width:72px;height:19px;"></div>
<div class="cell" style="left:964px;top:169px;width:65px;height:19px;"></div>
<div class="" style="left:136px;top:169px;width:23px;height:19px;background:#fff;border-right:1px solid #c4c4c4;border-bottom:1px solid #c4c4c4;"></div>
<div class="chk" style="left:139.5px;top:171.0px;width:13px;height:13px;"></div>
<div class="t" style="top:169px;height:18px;line-height:18px;font-size:11.30px;color:#1e1e1e;right:1061px;text-align:right;transform-origin:100% 50%;transform:scaleX(0.9556);">22</div>
<div class="t" style="top:169px;height:18px;line-height:18px;font-size:11.30px;color:#1e1e1e;left:216px;transform-origin:0 50%;transform:scaleX(0.9337);">ABRAÇADEIRA ACO P/ MANGUEIRA</div>
<div class="t" style="top:169px;height:18px;line-height:18px;font-size:11.30px;color:#1e1e1e;right:310px;text-align:right;transform-origin:100% 50%;transform:scaleX(0.9653);">28,000</div>
<div class="t" style="top:169px;height:18px;line-height:18px;font-size:11.30px;color:#1e1e1e;right:245px;text-align:right;transform-origin:100% 50%;transform:scaleX(0.9653);">68,000</div>
<div class="sb" style="left:1118px;top:150px;width:15px;height:138px;"></div>
<svg style="left:1120.0px;top:153.5px;color:#555" width="11" height="11" viewBox="0 0 24 24" fill="none" stroke="#555" stroke-width="2.9" stroke-linecap="round" stroke-linejoin="round" ><path d="M4 15l8-8 8 8"/></svg>
<svg style="left:1120.0px;top:273.5px;color:#555" width="11" height="11" viewBox="0 0 24 24" fill="none" stroke="#555" stroke-width="2.9" stroke-linecap="round" stroke-linejoin="round" ><path d="M4 9l8 8 8-8"/></svg>
<div class="" style="left:1118px;top:132px;width:15px;height:18px;background:#f7f7f7;"></div>
<svg style="left:1119.0px;top:134.5px;color:#666" width="13" height="13" viewBox="0 0 24 24" fill="none" stroke="#666" stroke-width="1" stroke-linecap="round" stroke-linejoin="round" ><circle cx="12" cy="5" r="1.1" fill="currentColor" stroke="none"/><circle cx="12" cy="12" r="1.1" fill="currentColor" stroke="none"/><circle cx="12" cy="19" r="1.1" fill="currentColor" stroke="none"/></svg>
<div class="sb" style="left:136px;top:288px;width:997px;height:15px;"></div>
<svg style="left:161.5px;top:290.0px;color:#555" width="11" height="11" viewBox="0 0 24 24" fill="none" stroke="#555" stroke-width="2.9" stroke-linecap="round" stroke-linejoin="round" ><path d="M15 4l-8 8 8 8"/></svg>
<svg style="left:1103.5px;top:290.0px;color:#555" width="11" height="11" viewBox="0 0 24 24" fill="none" stroke="#555" stroke-width="2.9" stroke-linecap="round" stroke-linejoin="round" ><path d="M9 4l8 8-8 8"/></svg>
<svg style="left:138.0px;top:306.0px;color:#306bc9" width="19" height="19" viewBox="0 0 24 24" fill="none" stroke="#306bc9" stroke-width="1.4" stroke-linecap="round" stroke-linejoin="round" ><path d="M2.5 3.5h19l-7.5 9.5v8l-4-2.5v-5.5z"/></svg>
<div class="fin" style="left:164px;top:307px;width:572px;height:19px;"></div>
<div class="t" style="top:308px;height:19px;line-height:19px;font-size:11.30px;color:#858585;font-style:italic;left:168px;transform-origin:0 50%;transform:scaleX(0.9664);">Digite aqui para buscar...</div>
<div class="btn" style="left:135px;top:329.5px;width:107px;height:21.5px;"></div>
<svg style="left:159.069px;top:331.25px;color:#306bc9" width="18" height="18" viewBox="0 0 24 24" fill="none" stroke="#306bc9" stroke-width="1.6" stroke-linecap="round" stroke-linejoin="round" ><circle cx="10" cy="10" r="7.5"/><path d="M15.5 15.5L22 22"/></svg>
<div class="t" style="top:330.5px;height:21.5px;line-height:21.5px;font-size:11.30px;color:#1e1e1e;left:180.069px;transform-origin:0 50%;transform:scaleX(0.9566);"><u>P</u>roduto</div>
<div class="btn" style="left:243px;top:329.5px;width:107px;height:21.5px;"></div>
<svg style="left:247.4665px;top:331.75px;color:#306bc9" width="17" height="17" viewBox="0 0 24 24" fill="none" stroke="#306bc9" stroke-width="1.5" stroke-linecap="round" stroke-linejoin="round" ><path d="M2 8v11a1.5 1.5 0 0 0 1.500 1.500h8"/><path d="M2 8l2-4.500h11l2 4.500z"/><path d="M9.500 3.500v4.500"/><path d="M17 8v2"/><circle cx="17" cy="16" r="3.600"/><path d="M19.700 18.700l3 3"/></svg>
<div class="t" style="top:330.5px;height:21.5px;line-height:21.5px;font-size:11.30px;color:#1e1e1e;left:267.4665px;transform-origin:0 50%;transform:scaleX(0.9343);">Posição <u>e</u>stoque</div>
<div class="btn" style="left:352px;top:329.5px;width:26px;height:21.5px;"></div>
<svg style="left:356.5px;top:331.75px;color:#306bc9" width="17" height="17" viewBox="0 0 24 24" fill="none" stroke="#306bc9" stroke-width="1.5" stroke-linecap="round" stroke-linejoin="round" ><rect x="4.500" y="2" width="15" height="20" rx="2"/><path d="M4.500 8h15"/><g fill="currentColor" stroke="none"><rect x="7.200" y="10.500" width="2.200" height="2.200"/><rect x="10.900" y="10.500" width="2.200" height="2.200"/><rect x="14.600" y="10.500" width="2.200" height="2.200"/><rect x="7.200" y="14" width="2.200" height="2.200"/><rect x="10.900" y="14" width="2.200" height="2.200"/><rect x="14.600" y="14" width="2.200" height="2.200"/><rect x="7.200" y="17.500" width="2.200" height="2.200"/><rect x="10.900" y="17.500" width="2.200" height="2.200"/><rect x="14.600" y="17.500" width="2.200" height="2.200"/></g></svg>
<div class="btn" style="left:990px;top:329px;width:26px;height:22px;"></div>
<svg style="left:994.5px;top:331.5px;color:#306bc9" width="17" height="17" viewBox="0 0 24 24" fill="none" stroke="#306bc9" stroke-width="1.5" stroke-linecap="round" stroke-linejoin="round" ><rect x="2.500" y="3.500" width="19" height="17" rx="2"/><path d="M2.500 9h19M9 9v11.500"/></svg>
<div class="btn" style="left:1017px;top:329px;width:26px;height:22px;"></div>
<svg style="left:1021.5px;top:331.5px;color:#306bc9" width="17" height="17" viewBox="0 0 24 24" fill="none" stroke="#306bc9" stroke-width="1.5" stroke-linecap="round" stroke-linejoin="round" ><path d="M5.500 6.500L2.500 15v4.500a1 1 0 0 0 1 1h5a1 1 0 0 0 1-1V6.500z"/><path d="M18.500 6.500l3 8.500v4.500a1 1 0 0 1-1 1h-5a1 1 0 0 1-1-1V6.500z"/><path d="M9.500 9.500h5"/><path d="M6 4.200h3M15 4.200h3"/></svg>
<div class="btn" style="left:1044px;top:329px;width:26px;height:22px;"></div>
<svg style="left:1048.5px;top:331.5px;color:#306bc9" width="17" height="17" viewBox="0 0 24 24" fill="none" stroke="#306bc9" stroke-width="1.6" stroke-linecap="round" stroke-linejoin="round" ><path d="M7.500 21.500H6a1.500 1.500 0 0 1-1.500-1.500V4a1.500 1.500 0 0 1 1.500-1.500h6.500l5.500 5.500v3.500"/><path d="M12.500 2.500v5.500h5.500"/></svg>
<div class="btn" style="left:1080px;top:329px;width:26px;height:22px;"></div>
<svg style="left:1084.5px;top:331.5px;color:#306bc9" width="17" height="17" viewBox="0 0 24 24" fill="none" stroke="#306bc9" stroke-width="1.5" stroke-linecap="round" stroke-linejoin="round" ><rect x="3" y="3" width="18" height="18" rx="2.500"/><path d="M8 12.500l3 3 5.500-6.500"/></svg>
<div class="btn" style="left:1107px;top:329px;width:26px;height:22px;"></div>
<svg style="left:1111.5px;top:331.5px;color:#306bc9" width="17" height="17" viewBox="0 0 24 24" fill="none" stroke="#306bc9" stroke-width="1.5" stroke-linecap="round" stroke-linejoin="round" ><rect x="3" y="3" width="18" height="18" rx="2.500"/></svg>
<div class="t" style="top:341.5px;height:8px;line-height:8px;font-size:7.00px;color:#306bc9;font-weight:bold;left:1055.5px;transform-origin:0 50%;transform:scaleX(0.7345);">XLS</div>
<div class="" style="left:1074px;top:331px;width:1px;height:19px;background:#a0a0a0;"></div>
<div class="grid" style="left:135px;top:351px;width:999px;height:129px;"></div>
<div class="" style="left:136px;top:352px;width:981px;height:18px;background:#f0f0f0;"></div>
<div class="hd" style="left:136px;top:352px;width:23px;height:18px;"></div>
<div class="hd" style="left:159px;top:352px;width:121px;height:18px;"></div>
<div class="hd" style="left:280px;top:352px;width:90px;height:18px;"></div>
<div class="chk" style="left:139.5px;top:354.0px;width:13px;height:13px;"></div>
<svg style="left:140.75px;top:355.25px;color:#111" width="10.5" height="10.5" viewBox="0 0 24 24" fill="none" stroke="#111" stroke-width="3.6" stroke-linecap="round" stroke-linejoin="round" ><path d="M4 12.500l5.500 6L20 5"/></svg>
<div class="t" style="top:351px;height:18px;line-height:18px;font-size:11.30px;color:#1e1e1e;left:162px;transform-origin:0 50%;transform:scaleX(0.9375);">Origem reserva</div>
<div class="t" style="top:351px;height:18px;line-height:18px;font-size:11.30px;color:#1e1e1e;right:904px;text-align:right;transform-origin:100% 50%;transform:scaleX(0.9737);">Qtd.necessária</div>
<div class="" style="left:159px;top:370px;width:700px;height:19px;background:#b5f5b5;border-bottom:1px solid #c6f7c6;"></div>
<div class="" style="left:159px;top:370px;width:121px;height:19px;background:#404040;"></div>
<div class="" style="left:136px;top:370px;width:23px;height:19px;background:#fff;border-right:1px solid #c4c4c4;border-bottom:1px solid #c4c4c4;"></div>
<div class="chk" style="left:139.5px;top:372.0px;width:13px;height:13px;"></div>
<svg style="left:140.75px;top:373.25px;color:#111" width="10.5" height="10.5" viewBox="0 0 24 24" fill="none" stroke="#111" stroke-width="3.6" stroke-linecap="round" stroke-linejoin="round" ><path d="M4 12.500l5.500 6L20 5"/></svg>
<div class="t" style="top:370px;height:18px;line-height:18px;font-size:11.30px;color:#fff;left:162px;transform-origin:0 50%;transform:scaleX(0.9799);">Ped:26 Item:3 ID itm:</div>
<div class="t" style="top:370px;height:18px;line-height:18px;font-size:11.30px;color:#2a8a2a;right:905px;text-align:right;transform-origin:100% 50%;transform:scaleX(0.9674);">1,000</div>
<div class="" style="left:159px;top:389px;width:700px;height:19px;background:#b5f5b5;border-bottom:1px solid #c6f7c6;"></div>
<div class="" style="left:136px;top:389px;width:23px;height:19px;background:#fff;border-right:1px solid #c4c4c4;border-bottom:1px solid #c4c4c4;"></div>
<div class="chk" style="left:139.5px;top:391.0px;width:13px;height:13px;"></div>
<svg style="left:140.75px;top:392.25px;color:#111" width="10.5" height="10.5" viewBox="0 0 24 24" fill="none" stroke="#111" stroke-width="3.6" stroke-linecap="round" stroke-linejoin="round" ><path d="M4 12.500l5.500 6L20 5"/></svg>
<div class="t" style="top:389px;height:18px;line-height:18px;font-size:11.30px;color:#2a8a2a;left:162px;transform-origin:0 50%;transform:scaleX(0.9799);">Ped:60 Item:1 ID itm:</div>
<div class="t" style="top:389px;height:18px;line-height:18px;font-size:11.30px;color:#2a8a2a;right:905px;text-align:right;transform-origin:100% 50%;transform:scaleX(0.9674);">1,000</div>
<div class="" style="left:159px;top:408px;width:700px;height:19px;background:#b5f5b5;border-bottom:1px solid #c6f7c6;"></div>
<div class="" style="left:136px;top:408px;width:23px;height:19px;background:#fff;border-right:1px solid #c4c4c4;border-bottom:1px solid #c4c4c4;"></div>
<div class="chk" style="left:139.5px;top:410.0px;width:13px;height:13px;"></div>
<svg style="left:140.75px;top:411.25px;color:#111" width="10.5" height="10.5" viewBox="0 0 24 24" fill="none" stroke="#111" stroke-width="3.6" stroke-linecap="round" stroke-linejoin="round" ><path d="M4 12.500l5.500 6L20 5"/></svg>
<div class="t" style="top:408px;height:18px;line-height:18px;font-size:11.30px;color:#2a8a2a;left:162px;transform-origin:0 50%;transform:scaleX(0.9933);">Ped:111 Item:1 ID itm:</div>
<div class="t" style="top:408px;height:18px;line-height:18px;font-size:11.30px;color:#2a8a2a;right:905px;text-align:right;transform-origin:100% 50%;transform:scaleX(0.9674);">1,000</div>
<div class="" style="left:159px;top:427px;width:700px;height:19px;background:#b5f5b5;border-bottom:1px solid #c6f7c6;"></div>
<div class="" style="left:136px;top:427px;width:23px;height:19px;background:#fff;border-right:1px solid #c4c4c4;border-bottom:1px solid #c4c4c4;"></div>
<div class="chk" style="left:139.5px;top:429.0px;width:13px;height:13px;"></div>
<svg style="left:140.75px;top:430.25px;color:#111" width="10.5" height="10.5" viewBox="0 0 24 24" fill="none" stroke="#111" stroke-width="3.6" stroke-linecap="round" stroke-linejoin="round" ><path d="M4 12.500l5.500 6L20 5"/></svg>
<div class="t" style="top:427px;height:18px;line-height:18px;font-size:11.30px;color:#2a8a2a;left:162px;transform-origin:0 50%;transform:scaleX(0.9858);">Ped:114 Item:1 ID itm:</div>
<div class="t" style="top:427px;height:18px;line-height:18px;font-size:11.30px;color:#2a8a2a;right:905px;text-align:right;transform-origin:100% 50%;transform:scaleX(0.9674);">2,000</div>
<div class="sb" style="left:1118px;top:370px;width:15px;height:94px;"></div>
<svg style="left:1120.0px;top:373.5px;color:#555" width="11" height="11" viewBox="0 0 24 24" fill="none" stroke="#555" stroke-width="2.9" stroke-linecap="round" stroke-linejoin="round" ><path d="M4 15l8-8 8 8"/></svg>
<svg style="left:1120.0px;top:449.5px;color:#555" width="11" height="11" viewBox="0 0 24 24" fill="none" stroke="#555" stroke-width="2.9" stroke-linecap="round" stroke-linejoin="round" ><path d="M4 9l8 8 8-8"/></svg>
<div class="" style="left:1118px;top:352px;width:15px;height:18px;background:#f7f7f7;"></div>
<svg style="left:1119.0px;top:354.5px;color:#306bc9" width="13" height="13" viewBox="0 0 24 24" fill="none" stroke="#306bc9" stroke-width="1" stroke-linecap="round" stroke-linejoin="round" ><circle cx="12" cy="5" r="1.1" fill="currentColor" stroke="none"/><circle cx="12" cy="12" r="1.1" fill="currentColor" stroke="none"/><circle cx="12" cy="19" r="1.1" fill="currentColor" stroke="none"/></svg>
<div class="sb" style="left:136px;top:464px;width:997px;height:15px;"></div>
<svg style="left:161.5px;top:466.0px;color:#555" width="11" height="11" viewBox="0 0 24 24" fill="none" stroke="#555" stroke-width="2.9" stroke-linecap="round" stroke-linejoin="round" ><path d="M15 4l-8 8 8 8"/></svg>
<svg style="left:1103.5px;top:466.0px;color:#555" width="11" height="11" viewBox="0 0 24 24" fill="none" stroke="#555" stroke-width="2.9" stroke-linecap="round" stroke-linejoin="round" ><path d="M9 4l8 8-8 8"/></svg>
<svg style="left:138.0px;top:482.0px;color:#306bc9" width="19" height="19" viewBox="0 0 24 24" fill="none" stroke="#306bc9" stroke-width="1.4" stroke-linecap="round" stroke-linejoin="round" ><path d="M2.5 3.5h19l-7.5 9.5v8l-4-2.5v-5.5z"/></svg>
<div class="fin" style="left:164px;top:483px;width:572px;height:19px;"></div>
<div class="t" style="top:484px;height:19px;line-height:19px;font-size:11.30px;color:#858585;font-style:italic;left:168px;transform-origin:0 50%;transform:scaleX(0.9664);">Digite aqui para buscar...</div>
<div class="" style="left:135px;top:505px;width:999px;height:42px;background:#fff;border:1px solid #c8c8c8;"></div>
<div class="t" style="top:509px;height:17px;line-height:17px;font-size:11.30px;color:#1e1e1e;left:138px;transform-origin:0 50%;transform:scaleX(0.9134);">Cliente: 50 CONSUMIDOR FINAL</div>
<div class="t" style="top:509px;height:17px;line-height:17px;font-size:11.30px;color:#1e1e1e;left:330px;transform-origin:0 50%;transform:scaleX(0.9792);">Dt.entrega</div>
<div class="btn" style="left:135px;top:550px;width:107px;height:21px;"></div>
<svg style="left:155.153px;top:551.5px;color:#306bc9" width="18" height="18" viewBox="0 0 24 24" fill="none" stroke="#306bc9" stroke-width="1.6" stroke-linecap="round" stroke-linejoin="round" ><circle cx="10" cy="10" r="7.5"/><path d="M15.5 15.5L22 22"/></svg>
<div class="t" style="top:551px;height:21px;line-height:21px;font-size:11.30px;color:#1e1e1e;left:176.153px;transform-origin:0 50%;transform:scaleX(0.9448);"><u>C</u>onsultar</div>
<div class="btn" style="left:243px;top:550px;width:107px;height:21px;"></div>
<svg style="left:270.363px;top:552.0px;color:#306bc9" width="17" height="17" viewBox="0 0 24 24" fill="none" stroke="#306bc9" stroke-width="1.4" stroke-linecap="round" stroke-linejoin="round" ><rect x="5" y="3" width="13" height="15" rx="1.500"/><path d="M2.500 6v14.500h11"/><path d="M8 7h7M8 10.500h7M8 14h3"/><path d="M14 17.500l6.500-6.500 2 2-6.500 6.500-2.700.700z" fill="#fdfdfd"/></svg>
<div class="t" style="top:551px;height:21px;line-height:21px;font-size:11.30px;color:#1e1e1e;left:290.363px;transform-origin:0 50%;transform:scaleX(0.9697);">Al<u>t</u>erar</div>
<div class="btn" style="left:352px;top:550px;width:107px;height:21px;"></div>
<div class="btn" style="left:135px;top:572px;width:107px;height:21px;"></div>
<svg style="left:166.0915px;top:574.5px;color:#306bc9" width="16" height="16" viewBox="0 0 24 24" fill="none" stroke="#306bc9" stroke-width="1.5" stroke-linecap="round" stroke-linejoin="round" ><rect x="3" y="3" width="18" height="18" rx="2.500"/><path d="M3 10h18"/><path d="M9.500 3v10h5v-10"/></svg>
<div class="t" style="top:573px;height:21px;line-height:21px;font-size:11.30px;color:#1e1e1e;left:185.0915px;transform-origin:0 50%;transform:scaleX(0.9339);"><u>L</u>otes</div>
<div class="btn" style="left:243px;top:572px;width:107px;height:21px;"></div>
<svg style="left:250.68399999999997px;top:574.0px;color:#306bc9" width="17" height="17" viewBox="0 0 24 24" fill="none" stroke="#306bc9" stroke-width="1.4" stroke-linecap="round" stroke-linejoin="round" ><path d="M1.500 6v11M22.500 6v11"/><path d="M4 8h3l3-2 4 1 2.500 1h3.500"/><path d="M4 15.500h2l4 3 2-.500 1.500-1 3 .500 1.500-2h2"/><path d="M10 9.500l-1.500 3 2 1 2.500-3 4.500 4"/></svg>
<div class="t" style="top:573px;height:21px;line-height:21px;font-size:11.30px;color:#1e1e1e;left:270.68399999999997px;transform-origin:0 50%;transform:scaleX(0.9668);">Co<u>m</u>prometim.</div>
<div class="btn" style="left:352px;top:572px;width:26px;height:21px;"></div>
<svg style="left:356.5px;top:574.0px;color:#306bc9" width="17" height="17" viewBox="0 0 24 24" fill="none" stroke="#306bc9" stroke-width="1.5" stroke-linecap="round" stroke-linejoin="round" ><rect x="4.500" y="2" width="15" height="20" rx="2"/><path d="M4.500 8h15"/><g fill="currentColor" stroke="none"><rect x="7.200" y="10.500" width="2.200" height="2.200"/><rect x="10.900" y="10.500" width="2.200" height="2.200"/><rect x="14.600" y="10.500" width="2.200" height="2.200"/><rect x="7.200" y="14" width="2.200" height="2.200"/><rect x="10.900" y="14" width="2.200" height="2.200"/><rect x="14.600" y="14" width="2.200" height="2.200"/><rect x="7.200" y="17.500" width="2.200" height="2.200"/><rect x="10.900" y="17.500" width="2.200" height="2.200"/><rect x="14.600" y="17.500" width="2.200" height="2.200"/></g></svg>
<div class="btn" style="left:892px;top:550px;width:25px;height:21px;"></div>
<svg style="left:896.5px;top:552.5px;color:#306bc9" width="16" height="16" viewBox="0 0 24 24" fill="none" stroke="#306bc9" stroke-width="1.5" stroke-linecap="round" stroke-linejoin="round" ><rect x="3" y="3" width="18" height="18" rx="2.500"/><path d="M8 12.500l3 3 5.500-6.500"/></svg>
<div class="btn" style="left:919px;top:550px;width:25px;height:21px;"></div>
<svg style="left:923.5px;top:552.5px;color:#306bc9" width="16" height="16" viewBox="0 0 24 24" fill="none" stroke="#306bc9" stroke-width="1.5" stroke-linecap="round" stroke-linejoin="round" ><rect x="3" y="3" width="18" height="18" rx="2.500"/></svg>
<div class="" style="left:948px;top:551px;width:1px;height:19px;background:#b8b8b8;"></div>
<div class="btn" style="left:954px;top:549.5px;width:90px;height:21.5px;"></div>
<svg style="left:968.2865px;top:551.75px;color:#306bc9" width="17" height="17" viewBox="0 0 24 24" fill="none" stroke="#306bc9" stroke-width="1.6" stroke-linecap="round" stroke-linejoin="round" ><path d="M2.5 3.5h19l-7.5 9.5v8l-4-2.5v-5.5z"/></svg>
<div class="t" style="top:550.5px;height:21.5px;line-height:21.5px;font-size:11.30px;color:#1e1e1e;left:987.2865px;transform-origin:0 50%;transform:scaleX(0.9385);">F4-Exibir</div>
<div class="btnd" style="left:1044.5px;top:549.5px;width:89.5px;height:21.5px;"></div>
<svg style="left:1050.463px;top:551.25px;color:#9db6dc" width="18" height="18" viewBox="0 0 24 24" fill="none" stroke="#9db6dc" stroke-width="1.7" stroke-linecap="round" stroke-linejoin="round" ><path d="M3.500 10.500a8.700 8.700 0 0 1 15.800-3.500"/><path d="M19.800 2.500v5h-5"/><path d="M20.500 13.500a8.700 8.700 0 0 1-15.800 3.500"/><path d="M4.200 21.500v-5h5"/></svg>
<div class="t" style="top:550.5px;height:21.5px;line-height:21.5px;font-size:11.30px;color:#8a8a8a;left:1070.463px;transform-origin:0 50%;transform:scaleX(0.9451);">F5-Atualizar</div>
<div class="btn" style="left:1035.5px;top:593.5px;width:98.5px;height:39px;"></div>
<svg style="left:1065.5595px;top:604.0px;color:#306bc9" width="18" height="18" viewBox="0 0 24 24" fill="none" stroke="#306bc9" stroke-width="1.5" stroke-linecap="round" stroke-linejoin="round" ><path d="M8 3.500h-3a1.500 1.500 0 0 0-1.500 1.500v14a1.500 1.500 0 0 0 1.500 1.500h3"/><path d="M8.500 9.500h6v-4l7 6.500-7 6.500v-4h-6z"/></svg>
<div class="t" style="top:594.5px;height:39px;line-height:39px;font-size:11.30px;color:#1e1e1e;left:1085.5595px;transform-origin:0 50%;transform:scaleX(0.9146);">Sair</div>
<div class="win" style="left:373.5px;top:89px;width:523.0px;height:538px;border-color:#7a7a7a;box-shadow:0 2px 16px rgba(0,0,0,.30);"></div>
<div class="tb" style="left:374.5px;top:90px;width:521.0px;height:30px;"></div>
<svg style="left:383px;top:98px" width="14" height="14" viewBox="0 0 16 16"><rect width="16" height="16" fill="#0c3c9c"/><path d="M1 15L10.500 5.500" stroke="#fff" stroke-width="2.300" fill="none"/><path d="M6 3.300h6.700V10z" fill="#fff"/></svg>
<div class="t" style="top:91px;height:30px;line-height:30px;font-size:12.33px;color:#111;left:406px;transform-origin:0 50%;transform:scaleX(0.9481);">Manutenção das reservas - Consulta</div>
<svg style="left:866.75px;top:97.25px;color:#111" width="14.5" height="14.5" viewBox="0 0 24 24" fill="none" stroke="#111" stroke-width="1.9" stroke-linecap="round" stroke-linejoin="round" ><path d="M4 4l16 16M20 4L4 20"/></svg>
<svg style="left:871.5px;top:122.5px;color:#306bc9" width="17" height="17" viewBox="0 0 24 24" fill="none" stroke="#306bc9" stroke-width="1.5" stroke-linecap="round" stroke-linejoin="round" ><circle cx="12" cy="12" r="10"/><path d="M8.8 9.2a3.2 3.2 0 1 1 4.6 2.9c-.9.5-1.4 1.1-1.4 2.2v.4"/><circle cx="12" cy="17.6" r=".6" fill="currentColor"/></svg>
<div class="t" style="top:143px;height:20px;line-height:20px;font-size:11.30px;color:#6a6a6a;right:730.5px;text-align:right;transform-origin:100% 50%;transform:scaleX(0.9530);">Código da reserva</div>
<div class="inp" style="left:545px;top:142px;width:135px;height:20px;"></div>
<div class="t" style="top:143px;height:20px;line-height:20px;font-size:11.30px;color:#6e6e6e;right:593px;text-align:right;transform-origin:100% 50%;transform:scaleX(1.0102);">8.880.000.001</div>
<div class="sep" style="left:383px;top:175px;width:505px;height:1px;"></div>
<div class="t" style="top:187px;height:20px;line-height:20px;font-size:11.30px;color:#6a6a6a;right:730.5px;text-align:right;transform-origin:100% 50%;transform:scaleX(0.9854);">Produto</div>
<div class="inp" style="left:545px;top:186px;width:63px;height:20px;"></div>
<div class="t" style="top:187px;height:20px;line-height:20px;font-size:11.30px;color:#6e6e6e;right:665px;text-align:right;transform-origin:100% 50%;transform:scaleX(0.9556);">22</div>
<svg style="left:613.0px;top:187.5px;color:#306bc9" width="10" height="10" viewBox="0 0 24 24" fill="none" stroke="#306bc9" stroke-width="1.6" stroke-linecap="round" stroke-linejoin="round" ><circle cx="10" cy="10" r="7.5"/><path d="M15.5 15.5L22 22"/></svg>
<div class="inp" style="left:626px;top:186px;width:225px;height:20px;"></div>
<div class="t" style="top:187px;height:20px;line-height:20px;font-size:11.30px;color:#6e6e6e;left:630px;transform-origin:0 50%;transform:scaleX(0.9078);">ABRAÇADEIRA ACO P/ MANGUEIRA</div>
<svg style="left:615.5px;top:201px" width="5" height="3.500" viewBox="0 0 5 3.500"><path d="M0.300 0.300h4.400L2.500 3.200z" fill="#1b4fb0"/></svg>
<div class="t" style="top:209px;height:20px;line-height:20px;font-size:11.30px;color:#6a6a6a;right:730.5px;text-align:right;transform-origin:100% 50%;transform:scaleX(0.9142);">Combinação</div>
<div class="inp" style="left:545px;top:208px;width:63px;height:20px;"></div>
<svg style="left:608.5px;top:210.5px;color:#306bc9" width="15" height="15" viewBox="0 0 24 24" fill="none" stroke="#306bc9" stroke-width="1.6" stroke-linecap="round" stroke-linejoin="round" ><circle cx="10" cy="10" r="7.5"/><path d="M15.5 15.5L22 22"/></svg>
<div class="inp" style="left:626px;top:208px;width:225px;height:20px;"></div>
<div class="t" style="top:231px;height:20px;line-height:20px;font-size:11.30px;color:#6a6a6a;right:730.5px;text-align:right;transform-origin:100% 50%;transform:scaleX(0.9521);">Configuração</div>
<div class="inp" style="left:545px;top:230px;width:306px;height:20px;"></div>
<div class="t" style="top:253px;height:20px;line-height:20px;font-size:11.30px;color:#6a6a6a;right:730.5px;text-align:right;transform-origin:100% 50%;transform:scaleX(0.9410);">Local de estoque</div>
<div class="inp" style="left:545px;top:252px;width:36px;height:20px;"></div>
<div class="t" style="top:253px;height:20px;line-height:20px;font-size:11.30px;color:#6e6e6e;right:692px;text-align:right;transform-origin:100% 50%;transform:scaleX(0.9556);">1</div>
<svg style="left:581.5px;top:254.5px;color:#306bc9" width="15" height="15" viewBox="0 0 24 24" fill="none" stroke="#306bc9" stroke-width="1.6" stroke-linecap="round" stroke-linejoin="round" ><circle cx="10" cy="10" r="7.5"/><path d="M15.5 15.5L22 22"/></svg>
<div class="inp" style="left:599px;top:252px;width:252px;height:20px;"></div>
<div class="t" style="top:253px;height:20px;line-height:20px;font-size:11.30px;color:#6e6e6e;left:603px;transform-origin:0 50%;transform:scaleX(0.8092);">GERAL</div>
<div class="sep" style="left:383px;top:285px;width:505px;height:1px;"></div>
<div class="t" style="top:297px;height:20px;line-height:20px;font-size:11.30px;color:#6a6a6a;right:730.5px;text-align:right;transform-origin:100% 50%;transform:scaleX(0.9650);">Qtd.livre (disponível)</div>
<div class="inp" style="left:545px;top:296px;width:99px;height:20px;"></div>
<div class="t" style="top:297px;height:20px;line-height:20px;font-size:11.30px;color:#6e6e6e;right:629px;text-align:right;transform-origin:100% 50%;transform:scaleX(0.9747);">1.108,000</div>
<div class="t" style="top:319px;height:20px;line-height:20px;font-size:11.30px;color:#6a6a6a;right:730.5px;text-align:right;transform-origin:100% 50%;transform:scaleX(0.9465);">Quantidade necessária</div>
<div class="inp" style="left:545px;top:318px;width:99px;height:20px;"></div>
<div class="t" style="top:319px;height:20px;line-height:20px;font-size:11.30px;color:#6e6e6e;right:629px;text-align:right;transform-origin:100% 50%;transform:scaleX(0.9548);">1,000</div>
<div class="t" style="top:341px;height:20px;line-height:20px;font-size:11.30px;color:#6a6a6a;right:730.5px;text-align:right;transform-origin:100% 50%;transform:scaleX(0.9575);">Qtd.comprometida</div>
<div class="inp" style="left:545px;top:340px;width:99px;height:20px;"></div>
<div class="t" style="top:363px;height:20px;line-height:20px;font-size:11.30px;color:#6a6a6a;right:730.5px;text-align:right;transform-origin:100% 50%;transform:scaleX(0.9658);">Quantidade reservada</div>
<div class="inp" style="left:545px;top:362px;width:99px;height:20px;"></div>
<div class="t" style="top:363px;height:20px;line-height:20px;font-size:11.30px;color:#6e6e6e;right:629px;text-align:right;transform-origin:100% 50%;transform:scaleX(0.9548);">1,000</div>
<div class="t" style="top:385px;height:20px;line-height:20px;font-size:11.30px;color:#6a6a6a;right:730.5px;text-align:right;transform-origin:100% 50%;transform:scaleX(0.9625);">Quantidade atendida</div>
<div class="inp" style="left:545px;top:384px;width:99px;height:20px;"></div>
<div class="t" style="top:407px;height:20px;line-height:20px;font-size:11.30px;color:#6a6a6a;right:730.5px;text-align:right;transform-origin:100% 50%;transform:scaleX(0.9407);">Posição da reserva</div>
<div class="inp" style="left:545px;top:406px;width:198px;height:20px;"></div>
<div class="t" style="top:407px;height:20px;line-height:20px;font-size:11.30px;color:#6e6e6e;left:549px;transform-origin:0 50%;transform:scaleX(0.9585);">3-Totalmente Reservada</div>
<svg style="left:726.0px;top:410.0px;color:#8a8a8a" width="12" height="12" viewBox="0 0 24 24" fill="none" stroke="#8a8a8a" stroke-width="1.6" stroke-linecap="round" stroke-linejoin="round" ><path d="M4 9l8 8 8-8"/></svg>
<div class="t" style="top:429px;height:20px;line-height:20px;font-size:11.30px;color:#6a6a6a;right:730.5px;text-align:right;transform-origin:100% 50%;transform:scaleX(0.9245);">Usuário</div>
<div class="inp" style="left:545px;top:428px;width:198px;height:20px;"></div>
<div class="t" style="top:429px;height:20px;line-height:20px;font-size:11.30px;color:#6e6e6e;left:549px;transform-origin:0 50%;transform:scaleX(0.8432);">RECH</div>
<div class="t" style="top:429px;height:20px;line-height:20px;font-size:11.30px;color:#6e6e6e;left:627px;transform-origin:0 50%;transform:scaleX(0.9506);">(000000)</div>
<div class="t" style="top:451px;height:20px;line-height:20px;font-size:11.30px;color:#6a6a6a;right:730.5px;text-align:right;transform-origin:100% 50%;transform:scaleX(0.9570);">Data/Hora de inclusão</div>
<div class="inp" style="left:545px;top:450px;width:81px;height:20px;"></div>
<div class="t" style="top:451px;height:20px;line-height:20px;font-size:11.30px;color:#6e6e6e;left:549px;transform-origin:0 50%;transform:scaleX(0.9902);">07/06/2023</div>
<div class="inp" style="left:644.5px;top:450px;width:26.5px;height:20px;"></div>
<div class="t" style="top:451px;height:20px;line-height:20px;font-size:11.30px;color:#6e6e6e;left:648.5px;transform-origin:0 50%;transform:scaleX(0.8896);">Qua</div>
<div class="inp" style="left:671px;top:450px;width:72px;height:20px;"></div>
<div class="t" style="top:451px;height:20px;line-height:20px;font-size:11.30px;color:#6e6e6e;left:675px;transform-origin:0 50%;transform:scaleX(1.0197);">11:43:32</div>
<svg style="left:629px;top:451.5px" width="14.500" height="16.500" viewBox="0 0 14.500 16.500" fill="none" stroke="#2a66c8" stroke-width="1.300"><rect x="0.700" y="2.500" width="13" height="13.300" rx="1.200"/><path d="M0.700 5.800h13" stroke-width="1.800"/><path d="M4 0.500v3M10.500 0.500v3"/></svg>
<div class="t" style="top:457px;height:10px;line-height:10px;font-size:9.00px;color:#2a66c8;left:630px;width:12.5px;text-align:center;transform-origin:50% 50%;transform:scaleX(1.0488);">31</div>
<div class="sep" style="left:383px;top:484px;width:505px;height:1px;"></div>
<div class="t" style="top:495px;height:20px;line-height:20px;font-size:11.30px;color:#6a6a6a;right:730.5px;text-align:right;transform-origin:100% 50%;transform:scaleX(0.9170);">Sigla de origem</div>
<div class="inp" style="left:545px;top:494px;width:36px;height:20px;"></div>
<div class="t" style="top:495px;height:20px;line-height:20px;font-size:11.30px;color:#6e6e6e;left:549px;transform-origin:0 50%;transform:scaleX(0.9159);">DEM</div>
<div class="t" style="top:517px;height:20px;line-height:20px;font-size:11.30px;color:#6a6a6a;right:730.5px;text-align:right;transform-origin:100% 50%;transform:scaleX(0.9511);">Origem da reserva</div>
<div class="inp" style="left:545px;top:516px;width:306px;height:20px;"></div>
<div class="t" style="top:517px;height:20px;line-height:20px;font-size:11.30px;color:#6e6e6e;left:549px;transform-origin:0 50%;transform:scaleX(0.9637);">2-Item do pedido do faturamento</div>
<svg style="left:834.0px;top:520.0px;color:#8a8a8a" width="12" height="12" viewBox="0 0 24 24" fill="none" stroke="#8a8a8a" stroke-width="1.6" stroke-linecap="round" stroke-linejoin="round" ><path d="M4 9l8 8 8-8"/></svg>
<div class="t" style="top:539px;height:20px;line-height:20px;font-size:11.30px;color:#6a6a6a;right:730.5px;text-align:right;transform-origin:100% 50%;transform:scaleX(0.9178);">Origem</div>
<div class="inp" style="left:545px;top:538px;width:306px;height:20px;"></div>
<div class="t" style="top:539px;height:20px;line-height:20px;font-size:11.30px;color:#6e6e6e;left:549px;transform-origin:0 50%;transform:scaleX(0.9893);">Ped:26 Item:3 ID itm:</div>
<svg style="left:852.5px;top:539.5px;color:#306bc9" width="17" height="17" viewBox="0 0 24 24" fill="none" stroke="#306bc9" stroke-width="1.6" stroke-linecap="round" stroke-linejoin="round" ><circle cx="10" cy="10" r="7.5"/><path d="M15.5 15.5L22 22"/></svg>
<div class="sep" style="left:375px;top:571px;width:521px;height:1px;"></div>
<div class="btn" style="left:383px;top:582px;width:107px;height:21.5px;"></div>
<svg style="left:398.2025px;top:584.25px;color:#306bc9" width="17" height="17" viewBox="0 0 24 24" fill="none" stroke="#306bc9" stroke-width="1.5" stroke-linecap="round" stroke-linejoin="round" ><path d="M5 21.500V4a1.500 1.500 0 0 1 1.500-1.500h7l5.500 5.500v12a1.500 1.500 0 0 1-1.500 1.500z"/><path d="M13.500 2.500v5.500h5.500"/><circle cx="11.500" cy="14.500" r="3"/><path d="M13.700 16.700l2.500 2.500"/></svg>
<div class="t" style="top:583px;height:21.5px;line-height:21.5px;font-size:11.30px;color:#1e1e1e;left:418.2025px;transform-origin:0 50%;transform:scaleX(0.9289);"><u>O</u>bservação</div>
<div class="btn" style="left:383px;top:604.5px;width:107px;height:21px;"></div>
<svg style="left:405.49px;top:606.5px;color:#306bc9" width="17" height="17" viewBox="0 0 24 24" fill="none" stroke="#306bc9" stroke-width="1.5" stroke-linecap="round" stroke-linejoin="round" ><path d="M3.500 12a9 9 0 1 0 2.800-6.500"/><path d="M3 3v5h5"/><path d="M12 7v5.500l4 2"/></svg>
<div class="t" style="top:605.5px;height:21px;line-height:21px;font-size:11.30px;color:#1e1e1e;left:425.49px;transform-origin:0 50%;transform:scaleX(0.9560);">Histórico</div>
<div class="btnd" style="left:500px;top:582px;width:107.5px;height:21.5px;"></div>
<svg style="left:508.75299999999993px;top:584.75px;color:#9db6dc" width="16" height="16" viewBox="0 0 24 24" fill="none" stroke="#9db6dc" stroke-width="1.5" stroke-linecap="round" stroke-linejoin="round" ><rect x="3" y="3" width="18" height="18" rx="2.500"/><path d="M3 10h18"/><path d="M9.500 3v10h5v-10"/></svg>
<div class="t" style="top:583px;height:21.5px;line-height:21.5px;font-size:11.30px;color:#8a8a8a;left:527.7529999999999px;transform-origin:0 50%;transform:scaleX(0.9418);"><u>C</u>onsulta Lotes</div>
<div class="btn" style="left:680px;top:582px;width:99px;height:40px;"></div>
<svg style="left:693.5px;top:593.5px;color:#306bc9" width="17" height="17" viewBox="0 0 24 24" fill="none" stroke="#306bc9" stroke-width="1.8" stroke-linecap="round" stroke-linejoin="round" ><path d="M15 4l-8 8 8 8"/></svg>
<div class="t" style="top:586.5px;height:16px;line-height:16px;font-size:11.30px;color:#1e1e1e;left:718px;width:42px;text-align:center;transform-origin:50% 50%;transform:scaleX(0.9852);"><u>V</u>oltar</div>
<div class="t" style="top:600.5px;height:16px;line-height:16px;font-size:11.30px;color:#1e1e1e;left:712px;width:54px;text-align:center;transform-origin:50% 50%;transform:scaleX(0.9885);">(page up)</div>
<div class="" style="left:786px;top:580px;width:103px;height:44px;background:#fff;border:1px solid #2a63c4;"></div>
<div class="" style="left:788px;top:582px;width:99px;height:40px;background:#1b6ad8;border-radius:3px;"></div>
<svg style="left:860.5px;top:593.5px;color:#fff" width="17" height="17" viewBox="0 0 24 24" fill="none" stroke="#fff" stroke-width="1.9" stroke-linecap="round" stroke-linejoin="round" ><path d="M9 4l8 8-8 8"/></svg>
<div class="t" style="top:587px;height:16px;line-height:16px;font-size:11.30px;color:#fff;left:800px;width:52px;text-align:center;transform-origin:50% 50%;transform:scaleX(0.9405);"><u>A</u>vançar</div>
<div class="t" style="top:601px;height:16px;line-height:16px;font-size:11.30px;color:#fff;left:796px;width:62px;text-align:center;transform-origin:50% 50%;transform:scaleX(0.9862);">(page down)</div>
</div>
</body></html>
